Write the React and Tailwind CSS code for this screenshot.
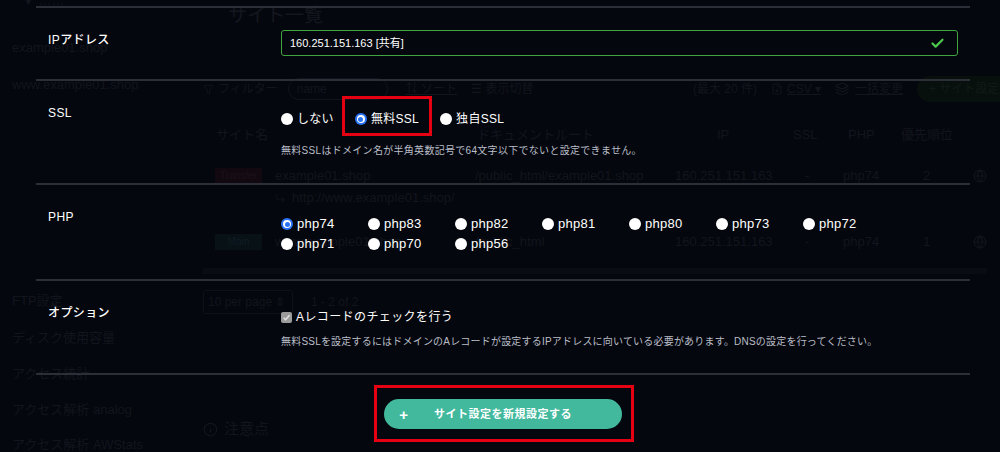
import React from "react";
import { Check, Globe, Filter, CornerDownRight, Info, Layers, FileDown } from "lucide-react";

const phpRows = [
  ["php74", "php83", "php82", "php81", "php80", "php73", "php72"],
  ["php71", "php70", "php56"],
];

const sideItems = [
  { label: "FTP設定", cls: "mt-[198px]" },
  { label: "ディスク使用容量", cls: "mt-[19px]" },
  { label: "アクセス統計", cls: "mt-[18px]" },
  { label: "アクセス解析 analog", cls: "mt-[18px]" },
  { label: "アクセス解析 AWStats", cls: "mt-[17px]" },
];

function Radio({ checked }) {
  if (checked) {
    return (
      <span className="w-[12px] h-[12px] rounded-full bg-[#2a72f5] flex items-center justify-center shrink-0">
        <span className="w-[8px] h-[8px] rounded-full bg-white flex items-center justify-center">
          <span className="w-[5px] h-[5px] rounded-full bg-[#2a72f5]" />
        </span>
      </span>
    );
  }
  return <span className="w-[12px] h-[12px] rounded-full bg-white shrink-0" />;
}

function RadioItem({ label, checked, textSize = "text-[12px]" }) {
  return (
    <label className={`flex items-center gap-[4px] leading-[18px] text-white tracking-[0.3px] ${textSize}`}>
      <Radio checked={checked} />
      {label}
    </label>
  );
}

// faint page that sits behind the dialog
function GhostPage() {
  return (
    <div className="flex w-full h-full text-[#12151d] text-[13px]">
      {/* sidebar */}
      <div className="w-[195px] shrink-0 pl-[12px] flex flex-col leading-[18px]">
        <span className="-mt-[8px] pl-[10px]">▼ ……</span>
        <span className="mt-[29px]">example01.shop</span>
        <span className="mt-[19px]">www.example01.shop</span>
        {sideItems.map((s) => (
          <span key={s.label} className={s.cls}>
            {s.label}
          </span>
        ))}
      </div>

      {/* main */}
      <div className="flex-1 flex flex-col pl-[8px]">
        <div className="mt-[4px] pl-[25px] text-[19px] leading-[24px] text-[#14171f]">
          サイト一覧
        </div>

        {/* toolbar */}
        <div className="mt-[48px] flex items-center h-[26px] text-[12px]">
          <Filter className="w-[11px] h-[11px]" />
          <span className="ml-[4px]">フィルター</span>
          <span className="ml-[10px] w-[100px] h-[22px] rounded-full border border-[#10131b] px-[8px] leading-[20px]">name</span>
          <span className="ml-[18px] underline">⇅ ソート</span>
          <span className="ml-[14px]">☰ 表示切替</span>
          <span className="ml-auto">(最大 20 件)</span>
          <FileDown className="ml-[14px] w-[12px] h-[12px]" />
          <span className="ml-[4px] underline">CSV ▾</span>
          <Layers className="ml-[14px] w-[14px] h-[14px]" />
          <span className="ml-[6px] underline">一括変更</span>
          <span className="ml-[14px] h-[26px] w-[100px] rounded-l-full bg-[#08100d] flex items-center pl-[12px] whitespace-nowrap overflow-hidden text-[#111a16]">
            + サイト設定の
          </span>
        </div>

        {/* table */}
        <div className="mt-[14px] mr-[30px] flex flex-col text-[13px]">
          <div className="flex h-[38px] items-center">
            <span className="w-[272px] pl-[13px]">サイト名</span>
            <span className="w-[200px] pl-[2px]">ドキュメントルート</span>
            <span className="w-[110px] pl-[42px]">IP</span>
            <span className="w-[58px] pl-[8px]">SSL</span>
            <span className="w-[58px] pl-[5px]">PHP</span>
            <span className="w-[70px]">優先順位</span>
          </div>
          <div className="flex h-[24px] items-center mt-[10px]">
            <span className="w-[47px] ml-[12px] h-[16px] bg-[#120910] text-[10px] leading-[16px] text-center text-[#1c1118]">Transfer</span>
            <span className="w-[213px] pl-[13px]">example01.shop</span>
            <span className="w-[200px]">/public_html/example01.shop</span>
            <span className="w-[130px]">160.251.151.163</span>
            <span className="w-[38px]">-</span>
            <span className="w-[80px]">php74</span>
            <span className="w-[50px]">2</span>
            <Globe className="w-[14px] h-[14px]" />
          </div>
          <div className="flex h-[20px] items-center pl-[72px] gap-[6px]">
            <CornerDownRight className="w-[11px] h-[11px]" />
            http://www.example01.shop/
          </div>
          <div className="flex h-[24px] items-center mt-[22px]">
            <span className="w-[47px] ml-[12px] h-[16px] bg-[#071116] text-[10px] leading-[16px] text-center text-[#0e1d24]">Main</span>
            <span className="w-[213px] pl-[13px]">www.example01.shop</span>
            <span className="w-[200px]">/public_html</span>
            <span className="w-[130px]">160.251.151.163</span>
            <span className="w-[38px]">-</span>
            <span className="w-[80px]">php74</span>
            <span className="w-[50px]">1</span>
            <Globe className="w-[14px] h-[14px]" />
          </div>
          <div className="mt-[14px] h-[6px] bg-[#0a0c13]" />
        </div>

        {/* pagination */}
        <div className="mt-[16px] flex items-center gap-[18px] text-[12px]">
          <span className="w-[90px] h-[24px] border border-[#0e1119] rounded-[3px] px-[4px] leading-[22px] whitespace-nowrap">10 per page ⇕</span>
          <span>1 - 2 of 2</span>
        </div>

        <div className="mt-[104px] flex items-center gap-[6px] text-[15px]">
          <Info className="w-[15px] h-[15px]" />
          注意点
        </div>
      </div>
    </div>
  );
}

export default function App() {
  return (
    <div className="relative w-[1000px] h-[452px] overflow-hidden bg-[#05070e] font-['Liberation_Sans','Noto_Sans_CJK_JP',sans-serif]">
      <GhostPage />

      {/* dialog content */}
      <div className="absolute inset-0 px-[30px]">
        <div className="w-[934px] ml-[6px] pt-[6px] flex flex-col">
          {/* IP address */}
          <div className="flex h-[73px] border-t-2 border-[#2c2f38]">
            <div className="w-[245px] pl-[12px] pt-[23px] text-[12px] leading-[18px] font-medium text-white tracking-[0.4px]">
              IPアドレス
            </div>
            <div className="flex-1 pt-[22px] pr-[12px]">
              <div className="h-[26px] border border-[#3fa53f] rounded-[3px] flex items-center pl-[8px] pr-[12px] text-[11px] text-white">
                <span className="flex-1">160.251.151.163 [共有]</span>
                <Check className="w-[15px] h-[15px] text-[#4cc94c]" strokeWidth={3.5} />
              </div>
            </div>
          </div>

          {/* SSL */}
          <div className="flex h-[104px] border-t-2 border-[#2c2f38]">
            <div className="w-[245px] pl-[12px] pt-[23px] text-[12px] leading-[18px] font-medium text-white tracking-[0.4px]">
              SSL
            </div>
            <div className="flex-1 pt-[29px] flex flex-col">
              <div className="flex items-center gap-[21px]">
                <RadioItem label="しない" />
                <div className="-mx-[13px] -mt-[14px] -mb-[8px] px-[10px] pt-[11px] pb-[5px] border-[3px] border-[#e50012]">
                  <RadioItem label="無料SSL" checked />
                </div>
                <RadioItem label="独自SSL" />
              </div>
              <p className="mt-[15px] text-[10px] leading-[16px] text-[#b9bec8] tracking-[0.3px]">
                無料SSLはドメイン名が半角英数記号で64文字以下でないと設定できません。
              </p>
            </div>
          </div>

          {/* PHP */}
          <div className="flex h-[96px] border-t-2 border-[#2c2f38]">
            <div className="w-[245px] pl-[12px] pt-[23px] text-[12px] leading-[18px] font-medium text-white tracking-[0.4px]">
              PHP
            </div>
            <div className="flex-1 pt-[30px] flex flex-col gap-[2px]">
              {phpRows.map((row, i) => (
                <div key={i} className="grid grid-cols-[repeat(7,87px)]">
                  {row.map((v) => (
                    <RadioItem key={v} label={v} checked={v === "php74"} textSize="text-[13px]" />
                  ))}
                </div>
              ))}
            </div>
          </div>

          {/* options */}
          <div className="flex h-[94px] border-t-2 border-[#2c2f38]">
            <div className="w-[245px] pl-[12px] pt-[23px] text-[12px] leading-[18px] font-medium text-white tracking-[0.4px]">
              オプション
            </div>
            <div className="flex-1 pt-[27px] flex flex-col">
              <label className="flex items-center gap-[4px] text-[12px] leading-[18px] text-white tracking-[0.4px]">
                <span className="w-[11px] h-[11px] rounded-[2px] bg-[#9b9b9b] flex items-center justify-center">
                  <svg viewBox="0 0 10 10" className="w-[9px] h-[9px]">
                    <path d="M1.8 5.2 L4 7.4 L8.3 2.6" fill="none" stroke="#e6e6e6" strokeWidth="1.6" />
                  </svg>
                </span>
                Aレコードのチェックを行う
              </label>
              <p className="mt-[8px] text-[10px] leading-[16px] text-[#b9bec8] tracking-[0.2px]">
                無料SSLを設定するにはドメインのAレコードが設定するIPアドレスに向いている必要があります。DNSの設定を行ってください。
              </p>
            </div>
          </div>

          {/* submit */}
          <div className="border-t-2 border-[#2c2f38] flex justify-center">
            <div className="mt-[10px] ml-[2px] pl-[7px] pr-[9px] pt-[11px] pb-[10px] border-[3px] border-[#e50012]">
              <button className="w-[238px] h-[30px] rounded-full bg-[#42b99d] flex items-center pl-[14px] text-white text-[11px] font-bold tracking-[0.5px]">
                <span className="text-[15px] leading-none w-[12px]">+</span>
                <span className="flex-1 pr-[26px] text-center">サイト設定を新規設定する</span>
              </button>
            </div>
          </div>
        </div>
      </div>
    </div>
  );
}
